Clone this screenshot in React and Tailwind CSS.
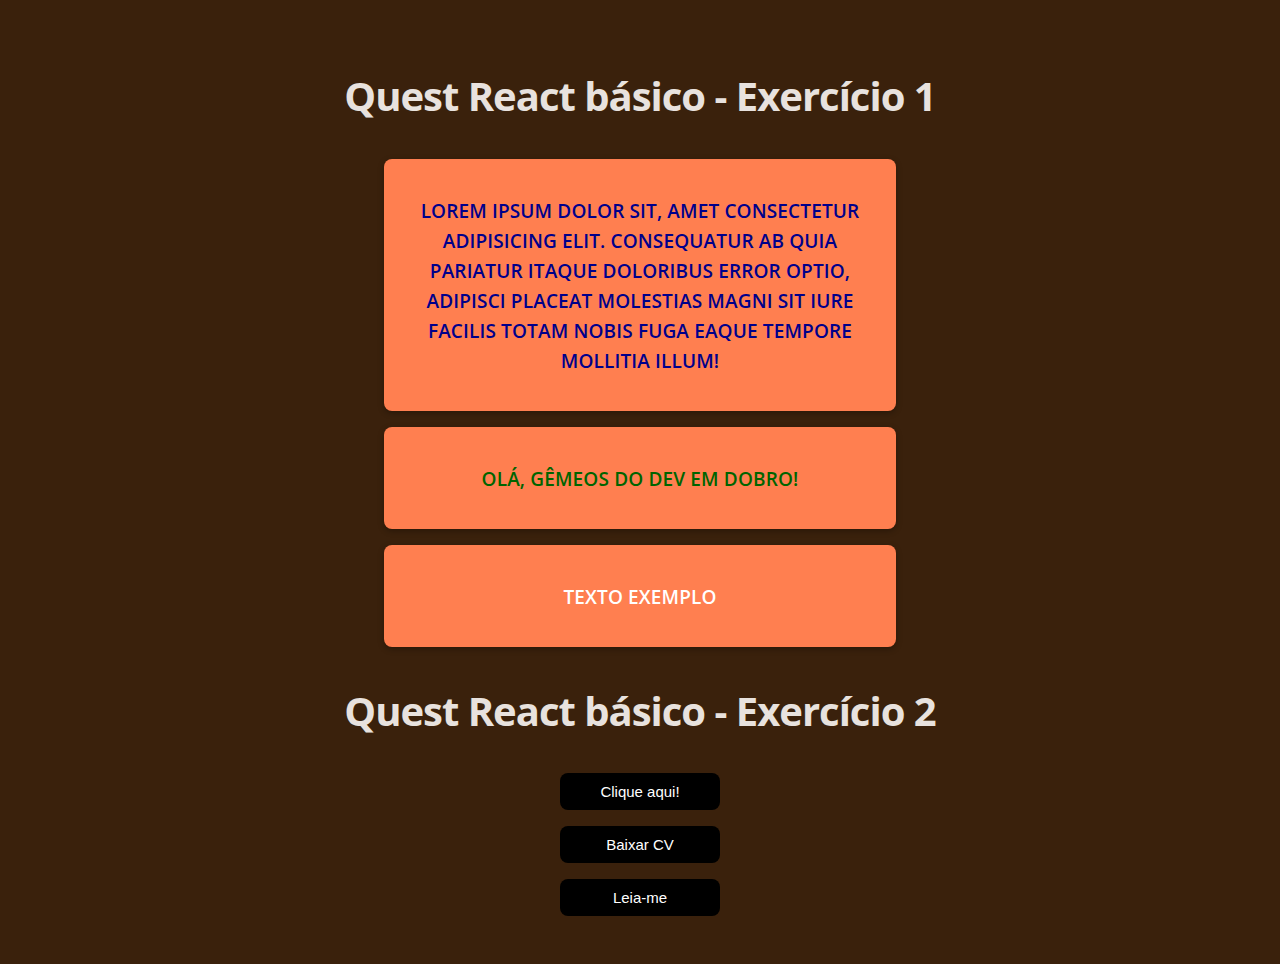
export default function App() {
  const font = { fontFamily: '"Open Sans", "Noto Sans", sans-serif' };
  return (
    <div className="min-h-[964px] w-full bg-[#3a210c] flex flex-col items-center pt-[72px]" style={font}>
      <h1 className="text-[40px] leading-[48px] font-bold text-[#e8e2de] tracking-[-1px]">Quest React básico - Exercício 1</h1>
      <div className="mt-[39px] flex flex-col gap-4 w-[512px]">
        <div className="bg-[#ff7f50] rounded-lg shadow-[0_2px_6px_rgba(0,0,0,0.3)] px-8 pt-[37px] pb-[35px] text-center">
          <p className="text-[19px] leading-[30px] font-semibold uppercase text-[#00008b] tracking-[0.15px]">
            Lorem ipsum dolor sit, amet consectetur adipisicing elit. Consequatur ab quia pariatur itaque doloribus error optio, adipisci placeat molestias magni sit iure facilis totam nobis fuga eaque tempore mollitia illum!
          </p>
        </div>
        <div className="bg-[#ff7f50] rounded-lg shadow-[0_2px_6px_rgba(0,0,0,0.3)] px-8 pt-[37px] pb-[35px] text-center">
          <p className="text-[19px] leading-[30px] font-semibold uppercase text-[#006400] tracking-[0.15px]">Olá, gêmeos do Dev em Dobro!</p>
        </div>
        <div className="bg-[#ff7f50] rounded-lg shadow-[0_2px_6px_rgba(0,0,0,0.3)] px-8 pt-[37px] pb-[35px] text-center">
          <p className="text-[19px] leading-[30px] font-semibold uppercase text-white tracking-[0.15px]">Texto exemplo</p>
        </div>
      </div>
      <h2 className="mt-[40px] text-[40px] leading-[48px] font-bold text-[#e8e2de] tracking-[-1px]">Quest React básico - Exercício 2</h2>
      <div className="mt-[38px] flex flex-col gap-4" style={{ fontFamily: '"Liberation Sans", Arial, sans-serif' }}>
        {["Clique aqui!", "Baixar CV", "Leia-me"].map((t) => (
          <button key={t} className="w-[160px] h-[37px] bg-black text-white text-[15px] leading-[36px] pt-px rounded-lg">{t}</button>
        ))}
      </div>
    </div>
  );
}
